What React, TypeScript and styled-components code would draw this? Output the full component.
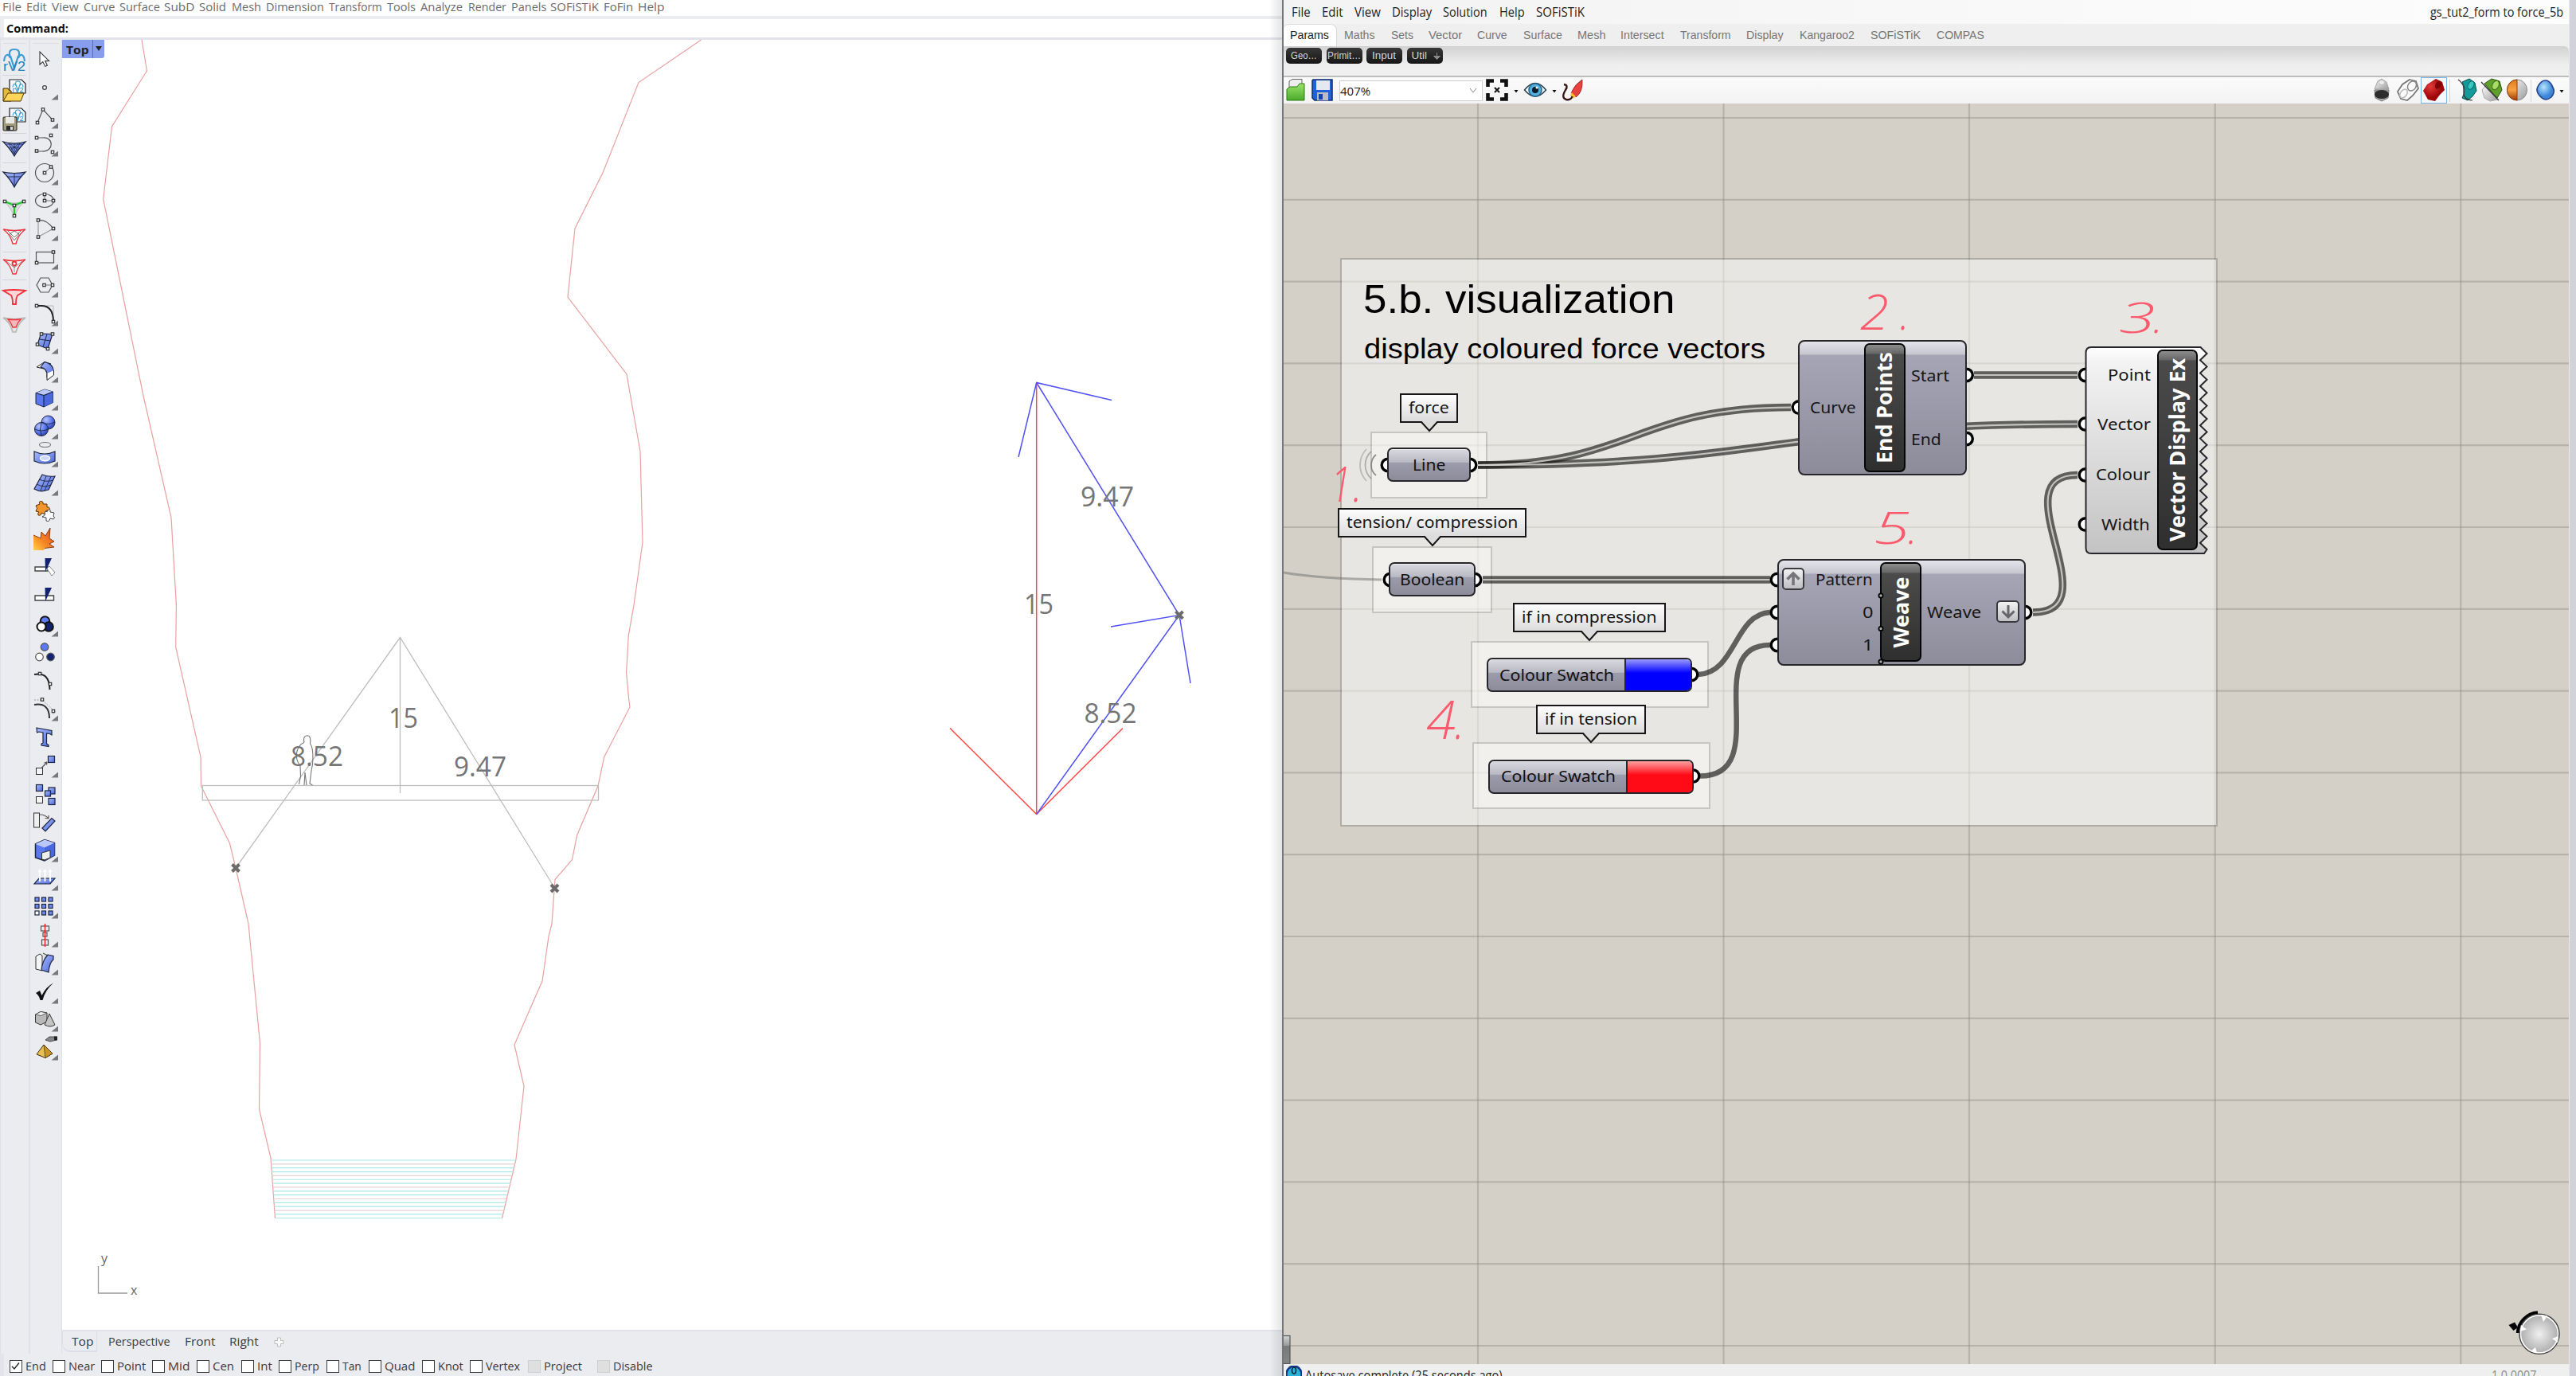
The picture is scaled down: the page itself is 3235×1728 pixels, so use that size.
import React, { useLayoutEffect, useRef, useState } from "react";
import styled, { createGlobalStyle } from "styled-components";

const UI = `"Open Sans", "Noto Sans", sans-serif`;
const NODE = `"Noto Sans", "Open Sans", sans-serif`;
const ARIAL = `"Liberation Sans", Arial, sans-serif`;

const GlobalStyle = createGlobalStyle`
  *, *::before, *::after { box-sizing: border-box; }
  body { margin: 0; background: #fff; font-family: ${UI}; }
`;

/* ---------- text fitted to a given width ---------- */

const FitBox = styled.span<{ $w: number }>`
  display: inline-block;
  flex: none;
  width: ${(p) => p.$w}px;
  white-space: nowrap;
`;
const FitInner = styled.span`
  display: inline-block;
  margin-left: -1px;
  transform-origin: 0 50%;
  white-space: pre;
`;

function Fit({ w, children }: { w: number; children: React.ReactNode }) {
  const ref = useRef<HTMLSpanElement>(null);
  const [scale, setScale] = useState(1);
  useLayoutEffect(() => {
    if (ref.current) setScale((w + 2) / ref.current.offsetWidth);
  }, [w, children]);
  return (
    <FitBox $w={w}>
      <FitInner ref={ref} style={{ transform: `scaleX(${scale})` }}>
        {children}
      </FitInner>
    </FitBox>
  );
}

type Run = [string, number, number];

const RunItem = styled.span<{ $gap: number }>`
  display: flex;
  flex: none;
  margin-left: ${(p) => p.$gap}px;
`;

/* A row of words, each with its start and end on the x axis. */
function TextRun({ items, start }: { items: Run[]; start: number }) {
  return (
    <>
      {items.map(([text, from, to], i) => (
        <RunItem key={i} $gap={from - (i ? items[i - 1][2] : start)}>
          <Fit w={to - from}>{text}</Fit>
        </RunItem>
      ))}
    </>
  );
}

/* ---------- windows ---------- */

const Screen = styled.div`
  display: flex;
  width: 3235px;
  height: 1728px;
  overflow: hidden;
  background: #d2d3da;
`;
const RhinoWindow = styled.section`
  position: relative;
  display: flex;
  flex-direction: column;
  flex: none;
  width: 1610px;
  height: 1728px;
  background: #ebecf0;
`;
const WindowShade = styled.div`
  position: absolute;
  top: 0;
  right: 0;
  width: 16px;
  height: 100%;
  background: linear-gradient(90deg, rgba(90, 95, 100, 0), rgba(90, 95, 100, 0.17));
`;
const RhinoMenu = styled.nav`
  display: flex;
  height: 20px;
  background: #fff;
  color: #6b6b6b;
  font-size: 14.5px;
  line-height: 18px;
`;
const CommandBar = styled.div`
  display: flex;
  height: 30px;
  padding: 4px 0 3px 5px;
  background: linear-gradient(#ebecf0 27px, #e2e3ea 27px);
`;
const CommandLine = styled.div`
  flex: 1;
  padding-left: 4px;
  background: #fff;
  color: #111;
  font-size: 15px;
  font-weight: 700;
  line-height: 23px;
`;
const RhinoBody = styled.div`
  display: flex;
  height: 1650px;
`;
const ToolColumn = styled.div<{ $w: number; $pad: number; $shift?: number }>`
  display: flex;
  flex-direction: column;
  align-items: center;
  flex: none;
  width: ${(p) => p.$w}px;
  padding: ${(p) => p.$pad}px ${(p) => p.$shift ?? 0}px 0 0;
  border-right: 1px solid #e0e1e8;
  border-left: 1px solid #e0e1e8;
  background: linear-gradient(#dcdde8 0 0) 3px 4px / calc(100% - 6px) 1px no-repeat, #ebecf0;
`;
const ToolCell = styled.div<{ $h: number }>`
  display: flex;
  align-items: center;
  justify-content: center;
  flex: none;
  width: 36px;
  height: ${(p) => p.$h}px;
  svg { flex: none; width: 36px; height: 36px; overflow: visible; }
`;
const ToolRule = styled.div`
  flex: none;
  width: 30px;
  height: 1px;
  background: #d3d4da;
`;
const RhinoMain = styled.div`
  display: flex;
  flex-direction: column;
  flex: 1;
`;
const Viewport = styled.div`
  position: relative;
  height: 1620px;
  background: #fff;
  svg { display: block; }
`;
const ViewTag = styled.div`
  position: absolute;
  top: 0;
  left: 0;
  display: flex;
  width: 53px;
  height: 23px;
  padding-left: 6px;
  border-radius: 0 0 3px 0;
  background: #869eeb;
  color: #222;
  font-size: 15px;
  font-weight: 700;
  line-height: 24px;
`;
const TagArrow = styled.div`
  display: flex;
  align-items: center;
  justify-content: center;
  width: 14px;
  margin-left: 6px;
  padding-bottom: 2px;
  border-left: 1px solid #5a6eb4;
  &::after { content: ""; border: 4.5px solid transparent; border-top: 6px solid #222; border-bottom: 0; }
`;
const ViewTabs = styled.div`
  display: flex;
  height: 30px;
  border-top: 2px solid #e1e2ea;
  color: #3a3a3a;
  font-size: 15px;
  line-height: 25px;
`;
const ActiveTab = styled.div`
  display: flex;
  width: 44px;
  height: 26px;
  padding-left: 12px;
  border-right: 1px solid #dcdde8;
  border-bottom: 2px solid #dcdde8;
  border-left: 1px solid #dcdde8;
  border-radius: 0 0 0 10px;
`;
const PlusIcon = styled.svg`
  width: 13px;
  height: 13px;
  margin: 7px 0 0 20px;
`;
const SnapBar = styled.div`
  display: flex;
  align-items: flex-start;
  height: 28px;
  padding-top: 5px;
  border-left: 5px solid #e4e5ec;
  color: #3a3a3a;
  font-size: 15px;
  line-height: 21px;
`;
const SnapItem = styled.label<{ $gap: number }>`
  display: flex;
  align-items: center;
  gap: 5px;
  margin-left: ${(p) => p.$gap}px;
`;
const CheckBox = styled.span<{ $off?: boolean }>`
  display: block;
  width: 16px;
  height: 16px;
  border: 1.5px solid ${(p) => (p.$off ? "#cfcfcf" : "#3c3c3c")};
  background: ${(p) => (p.$off ? "#dfdfdf" : "#fff")};
  svg { display: block; width: 13px; height: 13px; }
`;

const rhinoMenu: Run[] = [
  ["File", 4, 26], ["Edit", 34, 58], ["View", 66, 98], ["Curve", 106, 143], ["Surface", 151, 200],
  ["SubD", 207, 243], ["Solid", 251, 283], ["Mesh", 292, 327], ["Dimension", 335, 406],
  ["Transform", 414, 479], ["Tools", 487, 521], ["Analyze", 529, 580], ["Render", 589, 635],
  ["Panels", 643, 685], ["SOFiSTiK", 692, 751], ["FoFin", 759, 794], ["Help", 802, 833],
];

/* name, left edge of the box, right edge of the label */
const snaps: [string, number, number][] = [
  ["End", 12, 57], ["Near", 66, 118], ["Point", 127, 182], ["Mid", 191, 237],
  ["Cen", 247, 293], ["Int", 303, 341], ["Perp", 350, 400], ["Tan", 410, 453],
  ["Quad", 463, 520], ["Knot", 530, 581], ["Vertex", 590, 652], ["Project", 663, 730],
  ["Disable", 750, 819],
];

/* ---------- tool icons ---------- */

const S = ({ x, y }: { x: number; y: number }) => (
  <rect x={x - 1.7} y={y - 1.7} width="3.4" height="3.4" fill="#eee" stroke="#333" strokeWidth="1.2" />
);
const Fly = () => <path d="M35 26.5V33.5H26.5Z" fill="#77787c" />;
const line = { fill: "none", stroke: "#555", strokeWidth: 1.2 };
const blue = { fill: "url(#tBlue)", stroke: "#1d2440", strokeWidth: 1.2 };
const navy = "#12226e";

const Badge = ({ dx = 0, dy = 0, s = 1 }: { dx?: number; dy?: number; s?: number }) => (
  <g transform={`translate(${dx} ${dy}) scale(${s})`}>
    <path d="M5 19C6 9 11 9 13 15M31 19C30 9 25 9 23 15M13 15C10 5 14 4 18 4S26 5 23 15M13 12L18 28L23 12" fill="none" stroke="#3d9cd2" strokeWidth="2.2" />
    <text x="4" y="31" fontFamily={ARIAL} fontSize="17" fill="#2483bb" textLength="28" lengthAdjust="spacingAndGlyphs">rV2</text>
  </g>
);
const Page = () => <path d="M12 4H27L32 9V21H12Z" fill="#f4f8fb" stroke="#222" strokeWidth="1.2" />;

const leftTools: { h: number; rule?: boolean; art: React.ReactNode }[] = [
  { h: 36, rule: true, art: <Badge /> },
  {
    h: 37,
    art: (
      <g>
        <Page />
        <Badge dx={13.5} dy={4} s={0.5} />
        <path d="M4 31V15H10L12 18H14V31Z" fill="#e5b93a" stroke="#3b2c05" />
        <path d="M4 31L10 21H30L26 31Z" fill="#ffd65a" stroke="#4b3905" />
      </g>
    ),
  },
  {
    h: 35,
    rule: true,
    art: (
      <g>
        <Page />
        <Badge dx={13.5} dy={4} s={0.5} />
        <rect x="4" y="15" width="17" height="17" rx="1" fill="#a29a7c" stroke="#222" />
        <rect x="7" y="15" width="11" height="8" fill="#e9e9e6" />
        <rect x="8" y="26" width="9" height="6" fill="#2b2b2b" />
        <rect x="13" y="27" width="3" height="4" fill="#ddd" />
      </g>
    ),
  },
  { h: 36, rule: true, art: <g><path d="M4 10Q18 14 32 10Q23 19 18 28Q13 19 4 10Z" {...blue} /><path d="M8 13H28M12 17H24M18 12V27M11 12L18 25L25 12M14 20L23 13M22 20L13 13" {...line} strokeWidth={0.8} stroke="#1d2440" /></g> },
  { h: 40, art: <g><path d="M4 9Q18 12 32 9Q23 18 18 28Q13 18 4 9Z" {...blue} /><path d="M18 10V28M9 15H27" {...line} strokeWidth={0.9} stroke="#1d2440" /></g> },
  { h: 31, art: <g><path d="M6 10Q18 14 30 10Q22 19 18 28Q14 19 6 10Z" fill="#ddd" stroke="#bbb" /><path d="M6 10L18 15L30 10M18 15V27" fill="none" stroke="#22cc33" strokeWidth="2.4" /><S x={6} y={10} /><S x={30} y={10} /><S x={18} y={15} /><S x={18} y={28} /></g> },
  { h: 40, rule: true, art: <g><path d="M4 10Q18 13 32 10Q23 16 20 28H16Q13 16 4 10Z" fill="#fafafa" stroke="#f0333d" strokeWidth="1.5" /><path d="M10 12L18 20L26 12M12 16L18 12L24 16L18 24Z" {...line} strokeWidth={0.8} /></g> },
  { h: 34, rule: true, art: <g><path d="M4 10Q18 13 32 10Q23 16 20 28H16Q13 16 4 10Z" fill="#fafafa" stroke="#f0333d" strokeWidth="1.5" /><path d="M8 12L18 20L28 12M18 18V26" {...line} strokeWidth={0.7} /><circle cx="18" cy="15" r="2.5" fill="none" stroke="#f0333d" strokeWidth="1.8" /></g> },
  { h: 40, art: <g><path d="M5 10Q18 13 31 10" stroke="#aaa" fill="none" /><path d="M4 11Q16 9 32 11L22 17Q20 20 20 28H16Q16 20 14 17Z" fill="#fbd9da" stroke="#f0333d" strokeWidth="1.8" /></g> },
  { h: 30, art: <g><path d="M4 10Q18 13 32 10Q23 16 20 28H16Q13 16 4 10Z" fill="#e4e4e4" stroke="#b8b8b4" strokeWidth="1.6" /><path d="M10 12Q18 13 26 12Q22 16 20 22H16Q14 16 10 12Z" fill="#f9b9bd" stroke="#f0333d" strokeWidth="1.4" /></g> },
];

const modelTools: [React.ReactNode, boolean][] = [
  [<path d="M12 8V24L15.8 20.6L18.8 26.4L21.4 25.2L18.7 19.6L23.5 19.4Z" fill="#fff" stroke="#333" strokeWidth="1.1" />, false],
  [<circle cx="18" cy="18" r="2.4" fill="#fff" stroke="#444" strokeWidth="1.3" />, true],
  [<g><path d="M9 26L16 9.5L28 22.5" {...line} /><S x={9} y={26} /><S x={16} y={9.5} /><S x={28} y={22.5} /></g>, true],
  [<g><path d="M8 10H15C30 8 30 28 15 27H8" {...line} /><S x={8} y={10} /><S x={8} y={26.5} /><S x={26} y={7} /><S x={28} y={28} /></g>, true],
  [<g><circle cx="18" cy="18" r="11.5" {...line} /><path d="M18 18L26 10.5" {...line} strokeWidth={0.8} /><S x={18} y={18} /><S x={26} y={10.5} /></g>, true],
  [<g><ellipse cx="18" cy="18" rx="11.5" ry="8.5" {...line} /><path d="M18 9.5V18H30" {...line} strokeWidth={0.8} /><S x={18} y={10} /><S x={18} y={18} /><S x={29} y={18} /></g>, true],
  [<g><path d="M10 28.5V7.5M10 28.5L29 18" {...line} stroke="#999" /><path d="M10 7.5Q20 6 29 18" {...line} /><S x={10} y={7.5} /><S x={10} y={28.5} /><S x={29} y={18} /></g>, true],
  [<g><rect x="7.5" y="11.5" width="22" height="13.5" {...line} /><S x={29} y={11.5} /><S x={8} y={25} /></g>, true],
  [<g><path d="M8 18L13 9H23L28 18L23 27H13Z" {...line} /><path d="M17 18H27" {...line} strokeWidth={0.8} /><S x={17.5} y={18} /><S x={28} y={18} /></g>, true],
  [<g><path d="M20 8H29V18" {...line} stroke="#aaa" strokeWidth={0.8} /><path d="M8 8H14Q29 8 29 28" {...line} stroke="#222" strokeWidth={2} /><S x={8} y={8} /><S x={29} y={28} /></g>, true],
  [<g><path d="M13.5 8L28 8.5L22 27L9 22Z" {...blue} /><path d="M21 8.5L16 25M11.5 15L25 17" {...line} stroke="#1d2440" strokeWidth={1} /><S x={14} y={8.5} /><S x={28} y={8.5} /><S x={22} y={27} /><S x={9} y={21.5} /></g>, true],
  [<g><path d="M18 7.5L8 14L17 16L26 10Z" fill="#fff" stroke="#222" /><path d="M18 7.5Q29 10 29.5 20L21 26Q22 16 13 14Z" {...blue} /><path d="M21 22V30.5L29.5 24V18" fill="#fff" stroke="#222" /></g>, true],
  [<g><path d="M7 11.5L18 7L28.5 10V23.5L17 29L7 25Z" fill="#5a78f0" stroke="#1d2440" /><path d="M7 11.5L18 7L28.5 10L17 14.5Z" fill="#b9c8fb" /><path d="M17 14.5L28.5 10V23.5L17 29Z" fill="#4a68dd" /><path d="M7 11.5L17 14.5L28.5 10M17 14.5V29" {...line} stroke="#1d2440" /></g>, true],
  [<g><circle cx="22.5" cy="12.5" r="8.5" fill="url(#tBall)" stroke="#1d2440" /><circle cx="14" cy="21" r="8.5" fill="url(#tBall)" stroke="#1d2440" /><path d="M6 21Q14 25 22 21M14 13Q11 21 14 29M14 12Q22 17 31 12" {...line} stroke="#1d2440" strokeWidth={0.9} /></g>, true],
  [<g><ellipse cx="18.5" cy="5.5" rx="7" ry="3" {...line} stroke="#777" /><path d="M5 14Q18 20 31 14V26Q18 32 5 26Z" {...blue} /><ellipse cx="18.5" cy="22.5" rx="6" ry="3.2" fill="#cdd8ff" stroke="#fff" strokeWidth="1.5" /></g>, true],
  [<g><path d="M15 7Q22 10 31 9L23 26Q13 30 5 25Z" {...blue} /><path d="M11 13Q20 17 29 14M8 19Q17 24 26 20M20 9L13 27M26 9.5L18 27" {...line} stroke="#1d2440" strokeWidth={0.9} /></g>, true],
  [<g><path d="M7 11L12 9Q10 5 14 5.5Q17 6 16 9L21 9L21 13Q25 12 24 16Q22 18 20 17L19 22L14 20Q14 24 10 23Q9 20 11 19L7 18Q10 14 7 11Z" fill="#f0962c" stroke="#5a3208" /><path d="M18 19L22 18Q22 14.5 25 16L25 19L30 20L29 24Q32 26 29 28L25 27Q24 32 20 30L20 26L15 25Q20 23 18 19Z" fill="#fff" stroke="#444" /></g>, false],
  [<g><path d="M4 13L13 17L14 9L19 14L25 4L24 17L30 21L24 24L30 28L18 29.5L17 32H4Z" fill="url(#tFire)" /><path d="M4 13L13 17L14 9L19 14L25 4L24 17L30 21L24 24L30 28L18 29.5" fill="none" stroke="#7a3208" strokeWidth="0.9" /></g>, false],
  [<g><path d="M6 17H22V22H6Z" fill="#fff" stroke="#444" strokeWidth="1.4" /><path d="M21 19L24 16L31 24L27 28Z" fill="#fff" stroke="#888" /><path d="M18.5 6H27L19 23Z" fill={navy} /></g>, false],
  [<g><path d="M6 18H29.5V24H6Z" fill="#fff" stroke="#444" strokeWidth="1.4" /><path d="M18.5 8H27L19 25Z" fill={navy} /></g>, false],
  [<g stroke="#111" strokeWidth="2"><circle cx="18.5" cy="14" r="5.8" fill="#5b79f2" /><circle cx="23" cy="21" r="5.8" fill={navy} /><circle cx="14" cy="21" r="5.5" fill="#fff" /></g>, true],
  [<g stroke="#555" strokeWidth="1.2"><circle cx="18" cy="11.5" r="4.8" fill="#5b79f2" /><circle cx="11.5" cy="24" r="4.8" fill="#fff" /><circle cx="25.5" cy="24" r="4.8" fill={navy} /></g>, false],
  [<g><path d="M5 10Q24 6 24.5 29" {...line} stroke="#222" strokeWidth={2} /><S x={12} y={9} /><S x={25} y={22} /></g>, false],
  [<g><path d="M5 7H15L29 20V26" {...line} stroke="#888" strokeWidth={0.8} strokeDasharray="2 1.5" /><path d="M5 13Q24 10 24 30" {...line} stroke="#333" strokeWidth={2} /><S x={15} y={6.5} /><S x={29} y={21} /></g>, true],
  [<path d="M8 6L27 9.5V15L24.5 13.5L20.5 13V26L23 27.5V29.5L14 28V26L16 25V12L11 11L8.5 12Z" {...blue} />, false],
  [<g><path d="M12 24L21 14M21 14L17.5 15M21 14L20.5 17.5" {...line} /><rect x="7.5" y="21.5" width="8" height="8" fill="#f4f4f4" stroke="#333" /><rect x="22.5" y="6.5" width="8" height="8" {...blue} /></g>, true],
  [<g><rect x="7.5" y="6.5" width="8" height="8" {...blue} /><rect x="7.5" y="21.5" width="8" height="8" fill="#f4f4f4" stroke="#333" /><rect x="23" y="10" width="8" height="8" {...blue} /><rect x="18.5" y="14" width="7" height="7" {...blue} /><rect x="23" y="23.5" width="8" height="8" {...blue} /></g>, false],
  [<g><rect x="4.5" y="7" width="7" height="18" fill="#f0f0f0" stroke="#333" /><path d="M12 9Q19 9 23 14M23 14L18.5 13.5M23 14L23 10" {...line} /><path d="M15 26L27 13.5L31 17L19 30Z" {...blue} /></g>, false],
  [<g><path d="M6.5 11L18 5.5L30.5 9.5V25L18 32L6.5 28Z" fill="#5a78f0" stroke="#1d2440" strokeWidth="1.5" /><path d="M6.5 11L18 5.5L30.5 9.5L18 15.5Z" fill="#b9c8fb" /><path d="M18 15.5L30.5 9.5V25L18 32Z" fill="#4a68dd" /><path d="M14.5 30V22L25 19V28L18 31Z" fill="#eee" stroke="#333" /></g>, true],
  [<g><path d="M11 18H31L25 25H5Z" {...blue} /><path d="M12 22V8M18.5 22V8M25 22V8" stroke="#fff" strokeWidth="2" /><path d="M9.5 10L12 6L14.5 10ZM16 10L18.5 6L21 10ZM22.5 10L25 6L27.5 10Z" fill="#fff" /></g>, true],
  [<g>{[8.5, 17, 25.5].map((x) => [9.5, 18, 26.5].map((y) => <rect key={`${x}-${y}`} x={x - 2.5} y={y - 2.5} width="5" height="5" fill={x < 9 && y > 26 ? "#fff" : "#6f8af0"} stroke="#1d2440" strokeWidth="1.2" />))}</g>, true],
  [<g><rect x="13.5" y="7" width="10" height="6" {...line} /><rect x="16" y="15" width="5" height="5" {...line} /><rect x="14.5" y="24" width="8" height="7" {...line} /><path d="M18.5 4V33" stroke="#e01818" strokeWidth="1.3" /></g>, true],
  [<g><path d="M7 10L12 7L15 9V28L7 26Z" fill="#f4f4f4" stroke="#333" /><path d="M16 6L22 9L18 20" fill="#ddd" stroke="#333" /><path d="M22 8L29 9.5V14Q24 18 23 30L14 27Q15 16 22 8Z" {...blue} /></g>, true],
  [<path d="M7 20L12 17L14.5 23Q20 12 29 7.5Q19 16 15.5 29H12.5Q11 23 7 20Z" fill="#111" />, true],
  [<g><path d="M6.5 12L13 8.5L21 10V21L13 25L6.5 22Z" fill="#b9b9b9" stroke="#333" /><path d="M6.5 12L13 8.5L21 10L13.5 13.5Z" fill="#eee" stroke="#333" strokeWidth="0.7" /><path d="M24 11L31 25Q25 29 18 25Z" fill="#c4c4c4" stroke="#333" /></g>, true],
  [<g><path d="M19 8L24 4H33V8L25 10Z" fill="#888" stroke="#333" strokeWidth="0.8" /><path d="M30 3.5H34V8.5H30Z" fill="#222" /><path d="M17 14L28 25L19 30.5L8 26Z" fill="#e8bf55" stroke="#3b2c05" /><path d="M17 14L19 30.5L28 25Z" fill="#c79427" stroke="#3b2c05" strokeWidth="0.7" /></g>, true],
];

/* ---------- viewport drawing ---------- */

const Cross = ({ x, y }: { x: number; y: number }) => (
  <path d={`M${x - 4.5} ${y - 4.5}L${x + 4.5} ${y + 4.5}M${x + 4.5} ${y - 4.5}L${x - 4.5} ${y + 4.5}`} stroke="#6b6b6b" strokeWidth="4" />
);
const numbers: [string, number, number, number][] = [
  ["15", 488, 914, 37], ["8.52", 365, 962, 66], ["9.47", 570, 975, 66],
  ["9.47", 1357, 635.5, 67], ["15", 1286, 770.5, 37], ["8.52", 1361.5, 908, 66],
];

const Drawing = () => (
  <svg width="1532" height="1620" viewBox="78 50 1532 1620">
    <g fill="none" stroke="#e9a0a0" strokeWidth="1.2">
      <polyline points="178,50 184.5,89 180,96 140.5,159 129.7,250 180,497 215,650 221.4,760 220.7,812.7 252,950.7 252.5,987 288.5,1059 296,1090 312,1160 326.5,1310 325.5,1393 340,1454 345.5,1530" />
      <polyline points="880.6,50 802,103.6 757,217 722,287 713,373 787,470 804,567 807,681 796,760 789.3,798 786.6,845 789.7,878 791,888 758.7,950.7 751,987 724.6,1049 718.5,1079.6 697,1104.6 693,1160 689,1176 681,1232 646,1312 658,1364 648,1456 630.5,1530" />
    </g>
    {Array.from({ length: 16 }, (_, i) => (
      <line key={i} x1={340 + i * 0.37} x2={648 - i * 1.17} y1={1457 + i * 4.85} y2={1457 + i * 4.85} stroke={i % 3 === 1 ? "#e6d3d5" : "#aae8e9"} strokeWidth="1.2" />
    ))}
    <g fill="none" stroke="#bebebe" strokeWidth="1.3">
      <rect x="254.3" y="986.5" width="497.2" height="18.5" />
      <polyline points="296,1090 502.5,800.5 696.5,1115" />
      <line x1="502.5" x2="502.5" y1="800.5" y2="996" />
    </g>
    <path d="M382 932.5Q380 924 386 923.8Q391 924 389.5 934Q394 939 392.5 960L391 968L389 984L392.5 986M382 932.5Q374 935 372 948Q373 958 377 961L377.5 975L375.5 985M382 986L383 970L385 986" fill="none" stroke="#777" strokeWidth="1.1" />
    <g stroke="#ff4747" strokeWidth="1.5" fill="none">
      <line x1="1301.7" y1="480.5" x2="1301.7" y2="1022.5" />
      <polyline points="1193,914.5 1301.7,1022.5 1410,914.5" />
    </g>
    <g stroke="#5050f5" strokeWidth="1.5" fill="none">
      <polyline points="1279,574 1301.7,480.5 1396,502.5" />
      <polyline points="1301.7,480.5 1481,772.5 1301.7,1022.5" />
      <polyline points="1395,787 1481,772.5 1495,858" />
    </g>
    <Cross x={296} y={1090} />
    <Cross x={696.5} y={1115.5} />
    <Cross x={1481} y={772.3} />
    {numbers.map(([t, x, y, w], i) => (
      <text key={i} x={x} y={y} textLength={w} lengthAdjust="spacingAndGlyphs" fontFamily={UI} fontSize="35" fill="#757575">{t}</text>
    ))}
    <path d="M123.5 1590V1624H160" fill="none" stroke="#9a9a9a" strokeWidth="1.3" />
    <text x="127" y="1586" fontFamily={UI} fontSize="16" fill="#666">y</text>
    <text x="164" y="1626" fontFamily={UI} fontSize="16" fill="#666">x</text>
  </svg>
);

/* ---------- Grasshopper chrome ---------- */

const GhWindow = styled.section`
  display: flex;
  flex-direction: column;
  flex: none;
  width: 1617px;
  height: 1728px;
  border-left: 2px solid #74777b;
  border-right: 1px solid #e9e9e9;
  background: #efefef;
`;
const GhMenu = styled.nav`
  display: flex;
  align-items: center;
  height: 30px;
  background: linear-gradient(90deg, #f3f3f3, #fdfdfd);
  color: #1d1d1d;
  font-size: 15.5px;
  line-height: 30px;
`;
const GhTabs = styled.div`
  display: flex;
  height: 28px;
  background: #efefef;
  color: #767676;
  font-family: ${ARIAL};
  font-size: 14.5px;
  line-height: 29px;
`;
const GhTabActive = styled.div`
  display: flex;
  width: 67px;
  height: 28px;
  padding-left: 9px;
  border-right: 1px solid #d8d8d8;
  border-top: 1px solid #dadada;
  border-radius: 7px 8px 0 0;
  background: #fff;
  color: #222;
  line-height: 27px;
`;
const Ribbon = styled.div`
  display: flex;
  gap: 5.5px;
  height: 37px;
  padding: 2px 0 0 3px;
  border-radius: 0 6px 0 0;
  background: linear-gradient(#d2d2d2, #efefef 24px);
`;
const RibbonButton = styled.div<{ $pad: number }>`
  display: flex;
  align-items: center;
  width: 45px;
  height: 20px;
  padding-left: ${(p) => p.$pad}px;
  border-radius: 5px;
  background: linear-gradient(#373737, #161616);
  color: #d6d6d6;
  font-family: ${ARIAL};
  font-size: 13.5px;
  line-height: 20px;
  svg { width: 9px; height: 9px; margin-left: 8px; }
`;
const GhToolbar = styled.div`
  display: flex;
  align-items: center;
  height: 35px;
  padding-left: 3px;
  border-top: 2px solid #bdbdbd;
  background: linear-gradient(#fbfbfb, #f3f3f3);
`;
const BarIcon = styled.svg<{ $gap: number; $w: number }>`
  flex: none;
  width: ${(p) => p.$w}px;
  height: 28px;
  margin: 0 0 1px ${(p) => p.$gap}px;
  overflow: visible;
`;
const ZoomBox = styled.div`
  display: flex;
  align-items: center;
  justify-content: space-between;
  width: 180px;
  height: 26px;
  margin-left: 7px;
  padding: 0 6px 0 1px;
  border: 1.5px solid #cfcfcf;
  background: #fff;
  color: #222;
  font-size: 15px;
  line-height: 22px;
  svg { width: 10px; height: 7px; }
`;
const BarSpacer = styled.div`
  flex: 1;
`;
const ActiveFrame = styled.div`
  display: flex;
  align-items: center;
  width: 33px;
  height: 33px;
  margin: 0 3px 0 2px;
  border: 1.5px solid #7db7e4;
  background: #f4f8fb;
`;
const Divider = styled.div<{ $gap: number }>`
  width: 1px;
  height: 28px;
  margin-left: ${(p) => p.$gap}px;
  background: #d6d6d6;
`;
const StatusBar = styled.footer`
  display: flex;
  height: 15px;
  padding: 2px 42px 0 3px;
  overflow: hidden;
  background: #efefef;
  color: #222;
  font-size: 15.5px;
  line-height: 25px;
  svg { flex: none; width: 20px; height: 22px; margin-right: 5px; }
`;
const Version = styled.span`
  margin-left: auto;
  color: #8b8b8b;
`;

const ghMenu: Run[] = [
  ["File", 1623, 1645], ["Edit", 1661, 1686], ["View", 1702, 1733], ["Display", 1749, 1797],
  ["Solution", 1813, 1867], ["Help", 1884, 1914], ["SOFiSTiK", 1930, 1989],
  ["gs_tut2_form to force_5b", 3053, 3218],
];
const ghTabs: Run[] = [
  ["Maths", 1689, 1726], ["Sets", 1748, 1774], ["Vector", 1795, 1835], ["Curve", 1856, 1892],
  ["Surface", 1914, 1961], ["Mesh", 1982, 2015], ["Intersect", 2036, 2089], ["Transform", 2111, 2173],
  ["Display", 2194, 2239], ["Kangaroo2", 2261, 2328], ["SOFiSTiK", 2350, 2411], ["COMPAS", 2433, 2491],
];

const gem = "M12 0Q17 0 20 6L23 13Q24 20 19 25Q13 30 8 26Q1 20 1 13Q2 7 7 2Q9 0 12 0Z";
const Tick = ({ gap }: { gap: number }) => (
  <BarIcon viewBox="0 0 8 28" $w={8} $gap={gap}><path d="M1.5 14H6.5L4 17.5Z" fill="#111" /></BarIcon>
);

/* ---------- Grasshopper canvas ---------- */

const Canvas = styled.div`
  position: relative;
  width: 1614px;
  height: 1583px;
  overflow: hidden;
  background: #d4d0c8;
`;
const Plane = styled.div`
  position: absolute;
  top: -130px;
  left: -1612px;
  width: 3235px;
  height: 1728px;
`;
const Area = styled.div<{ $x: number; $y: number; $w: number; $h: number }>`
  position: absolute;
  left: ${(p) => p.$x}px;
  top: ${(p) => p.$y}px;
  width: ${(p) => p.$w}px;
  height: ${(p) => p.$h}px;
`;
const Group = styled(Area)<{ $tone?: number }>`
  border: 2px solid rgba(90, 90, 90, ${(p) => (p.$tone ? 0.24 : 0.3)});
  background: rgba(255, 255, 255, ${(p) => p.$tone ?? 0.48});
  background-clip: padding-box;
`;
const Layer = styled.svg`
  position: absolute;
  top: 0;
  left: 0;
`;
const Label = styled(Area)<{ $size: number; $font?: string; $color?: string }>`
  display: flex;
  align-items: center;
  color: ${(p) => p.$color ?? "#161616"};
  font-family: ${(p) => p.$font ?? NODE};
  font-size: ${(p) => p.$size}px;
  line-height: 1;
`;
const Mark = styled(Area)<{ $size: number }>`
  display: flex;
  align-items: center;
  justify-content: space-between;
  color: #fa5a6c;
  font-family: ${UI};
  font-size: ${(p) => p.$size}px;
  font-style: italic;
  font-weight: 300;
  line-height: 1;
`;
const Caption = styled(Area)`
  display: flex;
  align-items: center;
  justify-content: center;
  padding: 0 1px 1px 0;
  border: 2px solid #161616;
  background: linear-gradient(#fdfdfd, #dcdcdc);
  color: #161616;
  font-family: ${NODE};
  font-size: 20px;
  line-height: 1;
`;
const Tip = styled.svg`
  position: absolute;
  bottom: -14px;
  left: 50%;
  width: 24px;
  height: 15px;
  margin-left: -12px;
`;
const Capsule = styled(Area)`
  display: flex;
  align-items: center;
  justify-content: center;
  border: 2px solid #26262b;
  border-radius: 7px;
  background: linear-gradient(#d9d9e0, #b9b9c4 42%, #9c9bab 44%, #8d8c9b);
  box-shadow: inset 0 1px 0 #ececf0;
  color: #111;
  font-family: ${NODE};
  font-size: 20px;
  line-height: 1;
`;
const SwatchName = styled.div`
  display: flex;
  flex: 1;
  padding-left: 15px;
`;
const SwatchFill = styled.div<{ $c: string; $top: string }>`
  align-self: stretch;
  width: 83px;
  border-left: 2px solid #26262b;
  border-radius: 0 5px 5px 0;
  background: linear-gradient(${(p) => p.$top}, ${(p) => p.$c} 44%);
`;
const Component = styled(Area)`
  border: 2px solid #26262b;
  border-radius: 8px;
  background: linear-gradient(#e4e4ea, #c6c6d0 16px, #a6a5b5 17px, #8d8c9b);
`;
const NamePlate = styled(Area)`
  display: flex;
  align-items: center;
  justify-content: center;
  padding-right: 2px;
  border: 2.5px solid #060606;
  border-radius: 7px;
  background: linear-gradient(#8d8d8d, #666 11px, #4b4b4b 12px, #2f2f2f);
  color: #fff;
  font-family: ${NODE};
  font-size: 26px;
  font-weight: 700;
  line-height: 1;
`;
const Turned = styled.div`
  flex: none;
  transform: rotate(-90deg);
`;
const ArrowButton = styled(Area)`
  display: flex;
  align-items: center;
  justify-content: center;
  border: 2px solid #3a3a3e;
  border-radius: 5px;
  background: linear-gradient(#f2f2f2, #bfbfc4);
  svg { width: 20px; height: 20px; }
`;

const T = ({ x, y, w, children, size = 20 }: { x: number; y: number; w: number; size?: number; children: React.ReactNode }) => (
  <Label $x={x} $y={y - 15} $w={w} $h={30} $size={size}><Fit w={w}>{children}</Fit></Label>
);

const Note = ({ x, y, w, h = 36, tw, children }: { x: number; y: number; w: number; h?: number; tw: number; children: React.ReactNode }) => (
  <Caption $x={x} $y={y} $w={w} $h={h}>
    <Fit w={tw}>{children}</Fit>
    <Tip viewBox="0 0 24 15"><path d="M1 0H23V1H22L12 12L2 1H1Z" fill="#dcdcdc" /><path d="M0 2H2L12 13L22 2H24" fill="none" stroke="#161616" strokeWidth="2" /></Tip>
  </Caption>
);

const wires = {
  double: [
    "M1856 584C2052 584 2052 511.6 2249 511.6",
    "M1856 584C2232 584 2232 532.5 2609 532.5",
    "M1862 728H2223",
    "M2479 471H2609",
    "M2553 769C2653 769 2509 596.5 2609 596.5",
  ],
  single: [
    "M2133 847C2180 845 2178 771 2223 769",
    "M2135 974.5C2229 974.5 2133 810 2223 810",
  ],
};
const ports = [
  [1743, 584], [1846, 584], [1746, 728], [1852, 728], [2124, 847], [2126, 974.5],
  [2259, 511.6], [2469.5, 471], [2469.5, 551], [2619, 471], [2619, 532.5], [2619, 596.5],
  [2619, 658.5], [2232, 728], [2232, 769], [2232, 810], [2543, 769],
];
/* digit, left, middle, digit width, overall width, size */
const marks: [string, number, number, number, number, number][] = [
  ["1", 1672, 606, 24, 38, 61],
  ["2", 2337, 391, 34, 60, 60],
  ["3", 2662, 397, 43, 53, 53],
  ["5", 2354, 661, 43, 53, 55],
  ["4", 1792, 902, 35, 46, 66],
];
const zig = Array.from({ length: 16 }, (_, i) => {
  const y = 444 + i * 16.4;
  return `L2771.5 ${y.toFixed(1)}${i < 15 ? `L2763 ${(y + 8.2).toFixed(1)}` : ""}`;
}).join("");

const GhCanvas = () => (
  <Canvas>
    <Layer width="1614" height="1583" viewBox="1612 130 1614 1583">
      <g stroke="#8f8b80" strokeOpacity="0.42" strokeWidth="2.2">
        {[1856, 2164.5, 2473, 2781.7, 3090.3].map((x) => <line key={x} x1={x} x2={x} y1="130" y2="1713" />)}
        {Array.from({ length: 16 }, (_, i) => 148 + i * 102.8).map((y) => <line key={y} x1="1612" x2="3226" y1={y} y2={y} />)}
      </g>
    </Layer>
    <Plane>
      <Group $x={1683} $y={323.5} $w={1102} $h={714} />
      <Group $x={1721} $y={541.5} $w={147} $h={84} $tone={0.4} />
      <Group $x={1723} $y={685.5} $w={151} $h={84} $tone={0.4} />
      <Group $x={1847} $y={804.5} $w={299} $h={84} $tone={0.4} />
      <Group $x={1849} $y={932} $w={299} $h={84} $tone={0.4} />

      <Label $x={1713} $y={346} $w={390} $h={60} $size={50.5} $font={ARIAL} $color="#000"><Fit w={389}>5.b. visualization</Fit></Label>
      <Label $x={1714} $y={415} $w={504} $h={44} $size={35} $font={ARIAL} $color="#000"><Fit w={502}>display coloured force vectors</Fit></Label>

      <Layer width="3235" height="1728">
        <g fill="none" stroke="#181818" strokeOpacity="0.66">
          {wires.double.map((d) => <path key={d} d={d} strokeWidth="9.5" />)}
          {wires.single.map((d) => <path key={d} d={d} strokeWidth="6.5" />)}
        </g>
        <g fill="none" stroke="#dddcd8" strokeWidth="2.2" strokeOpacity="0.8">
          {wires.double.map((d) => <path key={d} d={d} />)}
        </g>
        <path d="M1612 719Q1660 727 1735 728" fill="none" stroke="#6e6e6a" strokeOpacity="0.5" strokeWidth="3" />
        <g fill="none" stroke="#777" strokeWidth="1.8">
          <path d="M1728 571A17 17 0 0 0 1728 597" strokeOpacity="0.8" />
          <path d="M1722 567A23 23 0 0 0 1722 601" strokeOpacity="0.5" />
          <path d="M1716 564A29 29 0 0 0 1716 604" strokeOpacity="0.4" />
        </g>
        {ports.map(([x, y]) => <circle key={`${x}-${y}`} cx={x} cy={y} r="7.8" fill="#fff" stroke="#000" strokeWidth="3.4" />)}
      </Layer>

      <Note x={1758} y={494} w={73} h={37} tw={49}>force</Note>
      <Note x={1680} y={638} w={237} h={37} tw={213}>tension/ compression</Note>
      <Note x={1900} y={757} w={192} h={37} tw={168}>if in compression</Note>
      <Note x={1929} y={885} w={138} h={37} tw={114}>if in tension</Note>

      <Capsule $x={1741.5} $y={562} $w={105} $h={43}><Fit w={39}>Line</Fit></Capsule>
      <Capsule $x={1744} $y={706} $w={109} $h={43}><Fit w={79}>Boolean</Fit></Capsule>
      <Capsule $x={1867} $y={826} $w={258} $h={43}>
        <SwatchName><Fit w={142}>Colour Swatch</Fit></SwatchName>
        <SwatchFill $c="#0000ff" $top="#9a9aff" />
      </Capsule>
      <Capsule $x={1869} $y={953.5} $w={258} $h={43}>
        <SwatchName><Fit w={142}>Colour Swatch</Fit></SwatchName>
        <SwatchFill $c="#ff0b17" $top="#ffa0a0" />
      </Capsule>

      <Component $x={2258} $y={427} $w={212} $h={169.5} />
      <T x={2274} y={512} w={56}>Curve</T>
      <NamePlate $x={2341} $y={431} $w={52} $h={162}><Turned><Fit w={138}>End Points</Fit></Turned></NamePlate>
      <T x={2401} y={472} w={46}>Start</T>
      <T x={2401} y={552} w={36}>End</T>

      <Layer width="3235" height="1728">
        <path d={`M2626 436H2763.5${zig}L2768 695H2626Q2619.5 695 2619.5 688V443Q2619.5 436 2626 436Z`} fill="url(#nLight)" stroke="#26262b" strokeWidth="2" />
      </Layer>
      <T x={2648} y={471} w={52}>Point</T>
      <T x={2635} y={533} w={65}>Vector</T>
      <T x={2633} y={596} w={67}>Colour</T>
      <T x={2640} y={659} w={59}>Width</T>
      <NamePlate $x={2709} $y={439} $w={51} $h={252}><Turned><Fit w={228}>Vector Display Ex</Fit></Turned></NamePlate>

      <Component $x={2232} $y={702} $w={312} $h={134} />
      <ArrowButton $x={2238} $y={713} $w={28} $h={28}><svg viewBox="0 0 20 20"><path d="M10 18V4M2.5 10.5L10 3L17.5 10.5" fill="none" stroke="#77777b" strokeWidth="3.6" /></svg></ArrowButton>
      <T x={2281} y={728} w={70}>Pattern</T>
      <T x={2340} y={769} w={11}>0</T>
      <T x={2340} y={810} w={11}>1</T>
      <NamePlate $x={2361} $y={706} $w={52} $h={125}><Turned><Fit w={87}>Weave</Fit></Turned></NamePlate>
      <T x={2421} y={769} w={66}>Weave</T>
      <ArrowButton $x={2507} $y={754} $w={29} $h={28}><svg viewBox="0 0 20 20"><path d="M10 2V16M2.5 9.5L10 17L17.5 9.5" fill="none" stroke="#66666a" strokeWidth="3" /></svg></ArrowButton>
      <Layer width="3235" height="1728">
        {[748, 789.5, 831].map((y) => <circle key={y} cx="2362" cy={y} r="2.6" fill="#aaa" stroke="#000" strokeWidth="1.8" />)}
        <g>
          <path d="M3162 1674A27 27 0 0 1 3187 1648.5" fill="none" stroke="#000" strokeWidth="4.5" />
          <path d="M3150.5 1664L3158 1660.5L3162 1667L3156.5 1671Z" fill="#000" />
          <circle cx="3189" cy="1675.3" r="25" fill="url(#nDial)" stroke="#444" strokeWidth="1.5" />
          <circle cx="3189" cy="1675.3" r="23.5" fill="none" stroke="#fff" strokeWidth="1.5" />
          <path d="M3191 1651L3199 1652.5L3194 1660ZM3213 1678L3212 1686L3205 1681ZM3178 1697L3184 1692L3186 1699ZM3166 1664L3173 1669.5L3164.5 1672Z" fill="#fff" />
        </g>
        <rect x="1611" y="1677.5" width="9" height="35" fill="url(#nTab)" stroke="#55585a" strokeWidth="1.2" />
      </Layer>
      {marks.map(([digit, x, y, dw, w, size]) => (
        <Mark key={digit} $x={x} $y={y - 35} $w={w} $h={70} $size={size}>
          <Fit w={dw}>{digit}</Fit>
          <Fit w={10}>.</Fit>
        </Mark>
      ))}
    </Plane>
  </Canvas>
);

const SharedPaints = styled.svg`
  position: absolute;
  width: 0;
  height: 0;
`;

const App: React.FC = () => (
  <>
    <GlobalStyle />
    <SharedPaints>
      <defs>
        <linearGradient id="tBlue" x1="0" y1="0" x2="1" y2="1"><stop offset="0" stopColor="#a9bbfb" /><stop offset="1" stopColor="#4c69dd" /></linearGradient>
        <radialGradient id="tBall" cx="0.35" cy="0.3" r="0.8"><stop offset="0" stopColor="#b5c5ff" /><stop offset="0.5" stopColor="#5f7cf0" /><stop offset="1" stopColor="#2437a0" /></radialGradient>
        <linearGradient id="tFire" x1="1" y1="0" x2="0" y2="1"><stop offset="0" stopColor="#e8461c" /><stop offset="0.6" stopColor="#f58a25" /><stop offset="1" stopColor="#ffd24a" /></linearGradient>
        <linearGradient id="nLight" x1="0" y1="0" x2="0" y2="1"><stop offset="0" stopColor="#fff" /><stop offset="0.07" stopColor="#f3f3f3" /><stop offset="1" stopColor="#c3c3c3" /></linearGradient>
        <radialGradient id="nDial"><stop offset="0" stopColor="#f0f0f0" /><stop offset="1" stopColor="#ababab" /></radialGradient>
        <linearGradient id="nTab" x1="0" y1="0" x2="0" y2="1"><stop offset="0" stopColor="#d2d4d2" /><stop offset="0.35" stopColor="#9a9c9a" /><stop offset="0.36" stopColor="#787b79" /><stop offset="1" stopColor="#828583" /></linearGradient>
        <radialGradient id="gRed" cx="0.35" cy="0.35"><stop offset="0" stopColor="#e33a3a" /><stop offset="1" stopColor="#9d0508" /></radialGradient>
        <radialGradient id="gSky" cx="0.4" cy="0.35"><stop offset="0" stopColor="#b5e6ff" /><stop offset="1" stopColor="#3c85d8" /></radialGradient>
        <linearGradient id="gSilver" x1="0" y1="0" x2="1" y2="1"><stop offset="0" stopColor="#fff" /><stop offset="1" stopColor="#9b9b9b" /></linearGradient>
        <linearGradient id="gGreen" x1="0" y1="0" x2="0" y2="1"><stop offset="0" stopColor="#9be36c" /><stop offset="1" stopColor="#49ab2a" /></linearGradient>
        <linearGradient id="gOrange" x1="0" y1="0" x2="0" y2="1"><stop offset="0" stopColor="#e07a1c" /><stop offset="0.5" stopColor="#f7a243" /><stop offset="1" stopColor="#9c3c06" /></linearGradient>
      </defs>
    </SharedPaints>
    <Screen>
      <RhinoWindow>
        <RhinoMenu><TextRun items={rhinoMenu} start={0} /></RhinoMenu>
        <CommandBar><CommandLine><Fit w={76}>Command:</Fit></CommandLine></CommandBar>
        <RhinoBody>
          <ToolColumn $w={37} $pad={8} $shift={1}>
            {leftTools.map(({ h, rule, art }, i) => (
              <React.Fragment key={i}>
                <ToolCell $h={h}><svg viewBox="0 0 36 36">{art}</svg></ToolCell>
                {rule && <ToolRule />}
              </React.Fragment>
            ))}
          </ToolColumn>
          <ToolColumn $w={41} $pad={7} $shift={3}>
            {modelTools.map(([art, fly], i) => (
              <ToolCell key={i} $h={35.46}><svg viewBox="0 0 36 36">{art}{fly && <Fly />}</svg></ToolCell>
            ))}
          </ToolColumn>
          <RhinoMain>
            <Viewport>
              <Drawing />
              <ViewTag><Fit w={26}>Top</Fit><TagArrow /></ViewTag>
            </Viewport>
            <ViewTabs>
              <ActiveTab><Fit w={25}>Top</Fit></ActiveTab>
              <TextRun start={122} items={[["Perspective", 137, 213], ["Front", 233, 269], ["Right", 289, 324]]} />
              <PlusIcon viewBox="0 0 13 13"><path d="M4.5 1H8.5V4.5H12V8.5H8.5V12H4.5V8.5H1V4.5H4.5Z" fill="#fafafa" stroke="#bdbdbd" /></PlusIcon>
            </ViewTabs>
          </RhinoMain>
        </RhinoBody>
        <SnapBar>
          {snaps.map(([name, box, to], i) => (
            <SnapItem key={name} $gap={box - (i ? snaps[i - 1][2] : 5)}>
              <CheckBox $off={i > 10}>{i === 0 && <svg viewBox="0 0 13 13"><path d="M2 7L5 10L11 2.5" fill="none" stroke="#222" strokeWidth="1.4" /></svg>}</CheckBox>
              <Fit w={to - box - 21}>{name}</Fit>
            </SnapItem>
          ))}
        </SnapBar>
        <WindowShade />
      </RhinoWindow>

      <GhWindow>
        <GhMenu><TextRun items={ghMenu} start={1612} /></GhMenu>
        <GhTabs>
          <GhTabActive><Fit w={47}>Params</Fit></GhTabActive>
          <TextRun items={ghTabs} start={1679} />
        </GhTabs>
        <Ribbon>
          <RibbonButton $pad={7}><Fit w={31}>Geo…</Fit></RibbonButton>
          <RibbonButton $pad={2}><Fit w={40}>Primit…</Fit></RibbonButton>
          <RibbonButton $pad={8}><Fit w={28}>Input</Fit></RibbonButton>
          <RibbonButton $pad={7}><Fit w={18}>Util</Fit><svg viewBox="0 0 9 9"><path d="M4.5 0V6M0.5 4.5H8.5L4.5 8.5Z" stroke="#888" fill="#888" /></svg></RibbonButton>
        </Ribbon>
        <GhToolbar>
          <BarIcon viewBox="0 0 24 28" $w={24} $gap={0}>
            <path d="M4 18V3L8 0.5H20V18Z" fill="#eee" stroke="#666" />
            <path d="M1 27V13L5 10H14L17 6H23V27Z" fill="url(#gGreen)" stroke="#2d7a17" />
          </BarIcon>
          <BarIcon viewBox="0 0 28 28" $w={28} $gap={8}>
            <path d="M2 1H26V27H4L1 24V2Z" fill="#1f62d8" stroke="#0c2d70" strokeWidth="1.5" />
            <rect x="6" y="2" width="17" height="12" fill="#e4e9ef" />
            <rect x="7" y="17" width="14" height="10" fill="#b9bcc2" />
            <rect x="9" y="19" width="5" height="7" fill="#1444a8" />
          </BarIcon>
          <ZoomBox><Fit w={36}>407%</Fit><svg viewBox="0 0 10 7"><path d="M1 1L5 6L9 1" fill="none" stroke="#888" /></svg></ZoomBox>
          <BarIcon viewBox="0 0 28 28" $w={28} $gap={4}>
            <path d="M2.5 10V2.5H10M18 2.5H25.5V10M25.5 18V25.5H18M10 25.5H2.5V18" fill="none" stroke="#111" strokeWidth="4.6" />
            <path d="M11 11L17 17M17 11L11 17" stroke="#111" strokeWidth="2" />
          </BarIcon>
          <Tick gap={6} />
          <BarIcon viewBox="0 0 28 28" $w={28} $gap={6}>
            <path d="M0.5 14Q14 -3 27.5 14Q14 30 0.5 14Z" fill="#eef4f8" stroke="#29404e" strokeWidth="1.5" />
            <circle cx="14" cy="14" r="8" fill="#55b0de" stroke="#24668c" strokeWidth="1.5" />
            <circle cx="14" cy="14" r="4" fill="#0c1c28" /><circle cx="16" cy="11" r="1.5" fill="#fff" />
          </BarIcon>
          <Tick gap={6} />
          <BarIcon viewBox="0 0 28 28" $w={28} $gap={5}>
            <path d="M26 1Q17 7 14 14L12 18L18 23Q27 17 26 1Z" fill="#e8413f" stroke="#8d1716" strokeWidth="0.8" />
            <path d="M12.500 17L18 22L14.500 25L11 21Z" fill="#f3c03a" />
            <path d="M3 7Q9 8 5 14Q-1 24 6 26Q12 27 13.500 22" fill="none" stroke="#3a1714" strokeWidth="2.4" />
          </BarIcon>
          <BarSpacer />
          <BarIcon viewBox="0 0 24 28" $w={24} $gap={0}>
            <path d="M12 0L18 4L21 13H3L7 3Z" fill="url(#gSilver)" stroke="#a5a5a5" />
            <ellipse cx="12" cy="4.5" rx="3.5" ry="3" fill="#eee" stroke="#bbb" />
            <path d="M3 14H21L20 24L12 28L4 24Z" fill="#aaa" stroke="#777" /><ellipse cx="12" cy="19.5" rx="9" ry="5.5" fill="#2d2d2d" />
          </BarIcon>
          <BarIcon viewBox="0 0 28 28" $w={28} $gap={7}>
            <path d="M16 1L24 3L27 12L20 21L13 27L5 25L1 16L7 7Z" fill="#fbfbfb" stroke="#777" strokeWidth="1.8" />
            <ellipse cx="19" cy="9" rx="5" ry="6.5" fill="none" stroke="#888" strokeWidth="1.6" transform="rotate(35 19 9)" />
            <ellipse cx="8.5" cy="18.5" rx="4" ry="6" fill="none" stroke="#bbb" strokeWidth="1.6" transform="rotate(35 8.5 18.5)" />
          </BarIcon>
          <ActiveFrame>
            <BarIcon viewBox="0 0 28 28" $w={28} $gap={1}>
              <path d="M17 0L25 4L28 14L22 20L16 28L7 26L1 15L6 7Z" fill="url(#gRed)" />
              <ellipse cx="20" cy="7.5" rx="3.500" ry="5.500" fill="#7d0306" transform="rotate(30 20 7.5)" />
            </BarIcon>
          </ActiveFrame>
          <Divider $gap={0} />
          <BarIcon viewBox="0 0 26 28" $w={26} $gap={8}>
            <path d="M7 4L16 0L23 5L25 15L20 22L14 27L7 24Q13 14 7 4Z" fill="#149a98" stroke="#0a4f4e" />
            <ellipse cx="18" cy="8" rx="3.5" ry="5.5" fill="#37c7c2" stroke="#0a6c6a" transform="rotate(25 18 8)" />
            <path d="M2 1Q10 6 9 16T20 27" fill="none" stroke="#333" strokeWidth="1.2" />
          </BarIcon>
          <BarIcon viewBox="0 0 28 28" $w={28} $gap={4}>
            <path d="M2 14L7 8L22 26L12 28L5 24Z" fill="url(#gSilver)" stroke="#aaa" />
            <path d="M5 6L14 0L24 3L27 14L21 24Z" fill="#5f9f2c" stroke="#2b5310" />
            <ellipse cx="19" cy="8" rx="4" ry="6" fill="#a7dc66" stroke="#3c7016" transform="rotate(25 19 8)" />
            <path d="M1 4L23 27" stroke="#333" strokeWidth="1.2" />
          </BarIcon>
          <BarIcon viewBox="0 0 26 28" $w={26} $gap={5}>
            <ellipse cx="13" cy="14" rx="12.5" ry="13" fill="url(#gSilver)" stroke="#8a8a8a" />
            <path d="M13 1A12.5 13 0 0 0 13 27Z" fill="url(#gOrange)" stroke="#8c3c08" />
          </BarIcon>
          <Divider $gap={4} />
          <BarIcon viewBox="0 0 24 28" $w={24} $gap={6}>
            <path d={gem} fill="url(#gSky)" stroke="#27468f" strokeWidth="1.8" transform="translate(0 2) scale(0.96 0.86)" />
          </BarIcon>
          <Tick gap={4} />
          <RunItem $gap={5} />
        </GhToolbar>
        <GhCanvas />
        <StatusBar>
          <svg viewBox="0 0 20 22"><ellipse cx="10" cy="11" rx="9.5" ry="10.5" fill="#27b4d8" stroke="#16358c" strokeWidth="2.5" /><ellipse cx="10" cy="6" rx="2.5" ry="4" fill="none" stroke="#123" strokeWidth="1.6" /></svg>
          <Fit w={246}>Autosave complete (25 seconds ago)</Fit>
          <Version><Fit w={54}>1.0.0007</Fit></Version>
        </StatusBar>
      </GhWindow>
    </Screen>
  </>
);

export default App;
